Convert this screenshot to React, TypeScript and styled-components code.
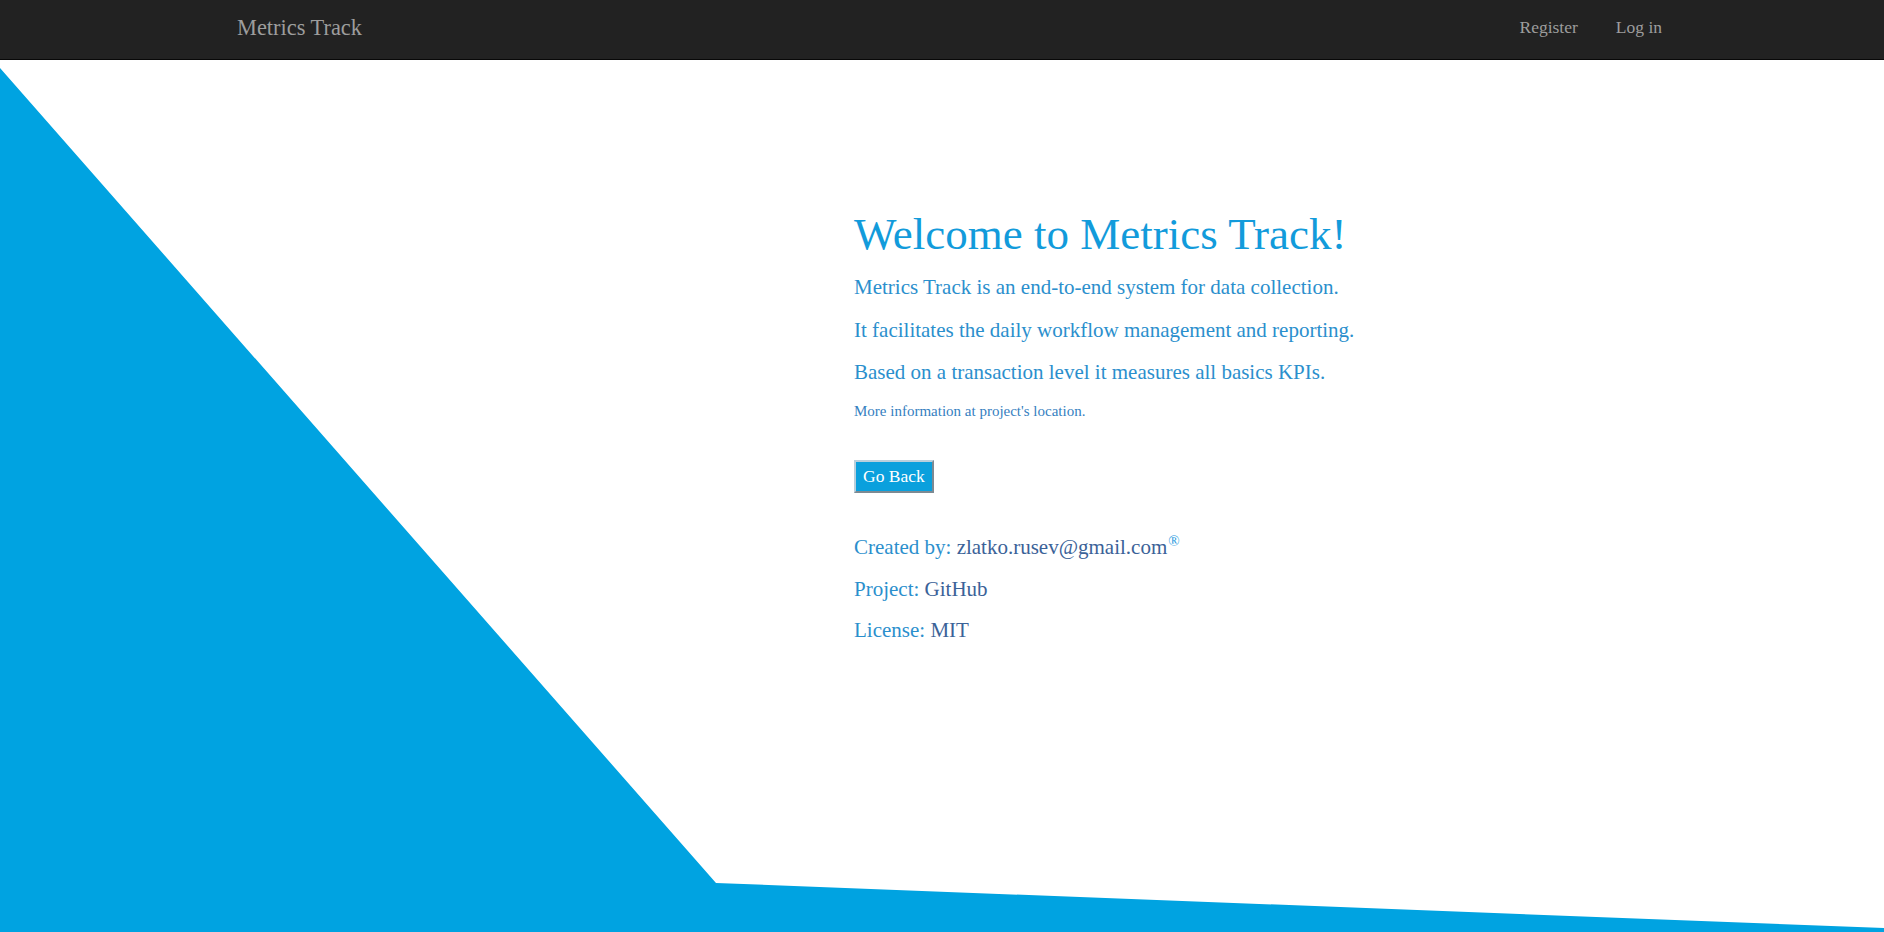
import React from "react";
import styled, { createGlobalStyle } from "styled-components";

const GlobalStyle = createGlobalStyle`
  html, body {
    margin: 0;
    padding: 0;
    background: #ffffff;
    font-family: "Liberation Serif", "Times New Roman", serif;
  }
  * { box-sizing: border-box; }
`;

const Page = styled.div`
  display: flex;
  flex-direction: column;
  min-height: 100vh;
`;

const NavBar = styled.header`
  height: 60px;
  background: #222222;
  border-bottom: 1px solid #080808;
  display: flex;
  align-items: center;
  justify-content: space-between;
  padding: 0 222px 6px 237px;
`;

const Brand = styled.a`
  font-size: 22.4px;
  line-height: 26px;
  color: #9d9d9d;
  text-decoration: none;
  margin-top: 3px;
`;

const NavLinks = styled.nav`
  display: flex;
  gap: 38px;
`;

const NavLink = styled.a`
  font-size: 17.5px;
  line-height: 20px;
  color: #9d9d9d;
  text-decoration: none;
`;

const Main = styled.main`
  position: relative;
  flex: 1;
  overflow: hidden;
  padding: 150px 0 0 854px;
`;

const Backdrop = styled.svg`
  position: absolute;
  inset: 0;
  width: 100%;
  height: 100%;
  z-index: 0;
`;

const Content = styled.section`
  position: relative;
  z-index: 1;
  display: flex;
  flex-direction: column;
  align-items: flex-start;
`;

const Title = styled.h1`
  margin: 0;
  font-size: 45px;
  line-height: 48px;
  font-weight: normal;
  color: #129bdb;
`;

const Lead = styled.p<{ $top?: number }>`
  margin: ${(p) => p.$top ?? 18.5}px 0 0;
  font-size: 21px;
  line-height: 24px;
  color: #2b8fcd;
`;

const Note = styled.p`
  margin: 19px 0 0;
  font-size: 15px;
  line-height: 17px;
  color: #3580bf;
`;

const BackButton = styled.button`
  margin-top: 40px;
  background: #0aa0dd;
  color: #ffffff;
  font-family: "Liberation Serif", "Times New Roman", serif;
  font-size: 17.5px;
  line-height: 20px;
  padding: 4px 7px 5px;
  border: 2px solid;
  border-color: #b9cfdc #7d8a93 #7d8a93 #b9cfdc;
  cursor: pointer;
`;

const Credits = styled.div`
  margin-top: 42px;
  display: flex;
  flex-direction: column;
  gap: 17.5px;
`;

const CreditLine = styled.p`
  margin: 0;
  font-size: 21px;
  line-height: 24px;
  color: #2b8fcd;
`;

const CreditLink = styled.a`
  color: #3b6298;
  text-decoration: none;
`;

const Mark = styled.sup`
  font-size: 15px;
  line-height: 0;
  color: #1f9ae0;
  vertical-align: 8px;
  margin-left: 1px;
`;

export default function App() {
  return (
    <>
      <GlobalStyle />
      <Page>
        <NavBar>
          <Brand href="#">Metrics Track</Brand>
          <NavLinks>
            <NavLink href="#">Register</NavLink>
            <NavLink href="#">Log in</NavLink>
          </NavLinks>
        </NavBar>
        <Main>
          <Backdrop viewBox="0 0 1884 872" preserveAspectRatio="none" aria-hidden="true">
            <polygon points="0,8 716,823 1884,868 1884,872 0,872" fill="#00a3e1" />
          </Backdrop>
          <Content>
            <Title>Welcome to Metrics Track!</Title>
            <Lead $top={17}>Metrics Track is an end-to-end system for data collection.</Lead>
            <Lead>It facilitates the daily workflow management and reporting.</Lead>
            <Lead>Based on a transaction level it measures all basics KPIs.</Lead>
            <Note>More information at project's location.</Note>
            <BackButton type="button">Go Back</BackButton>
            <Credits>
              <CreditLine>
                Created by: <CreditLink href="#">zlatko.rusev@gmail.com</CreditLink>
                <Mark>®</Mark>
              </CreditLine>
              <CreditLine>
                Project: <CreditLink href="#">GitHub</CreditLink>
              </CreditLine>
              <CreditLine>
                License: <CreditLink href="#">MIT</CreditLink>
              </CreditLine>
            </Credits>
          </Content>
        </Main>
      </Page>
    </>
  );
}
